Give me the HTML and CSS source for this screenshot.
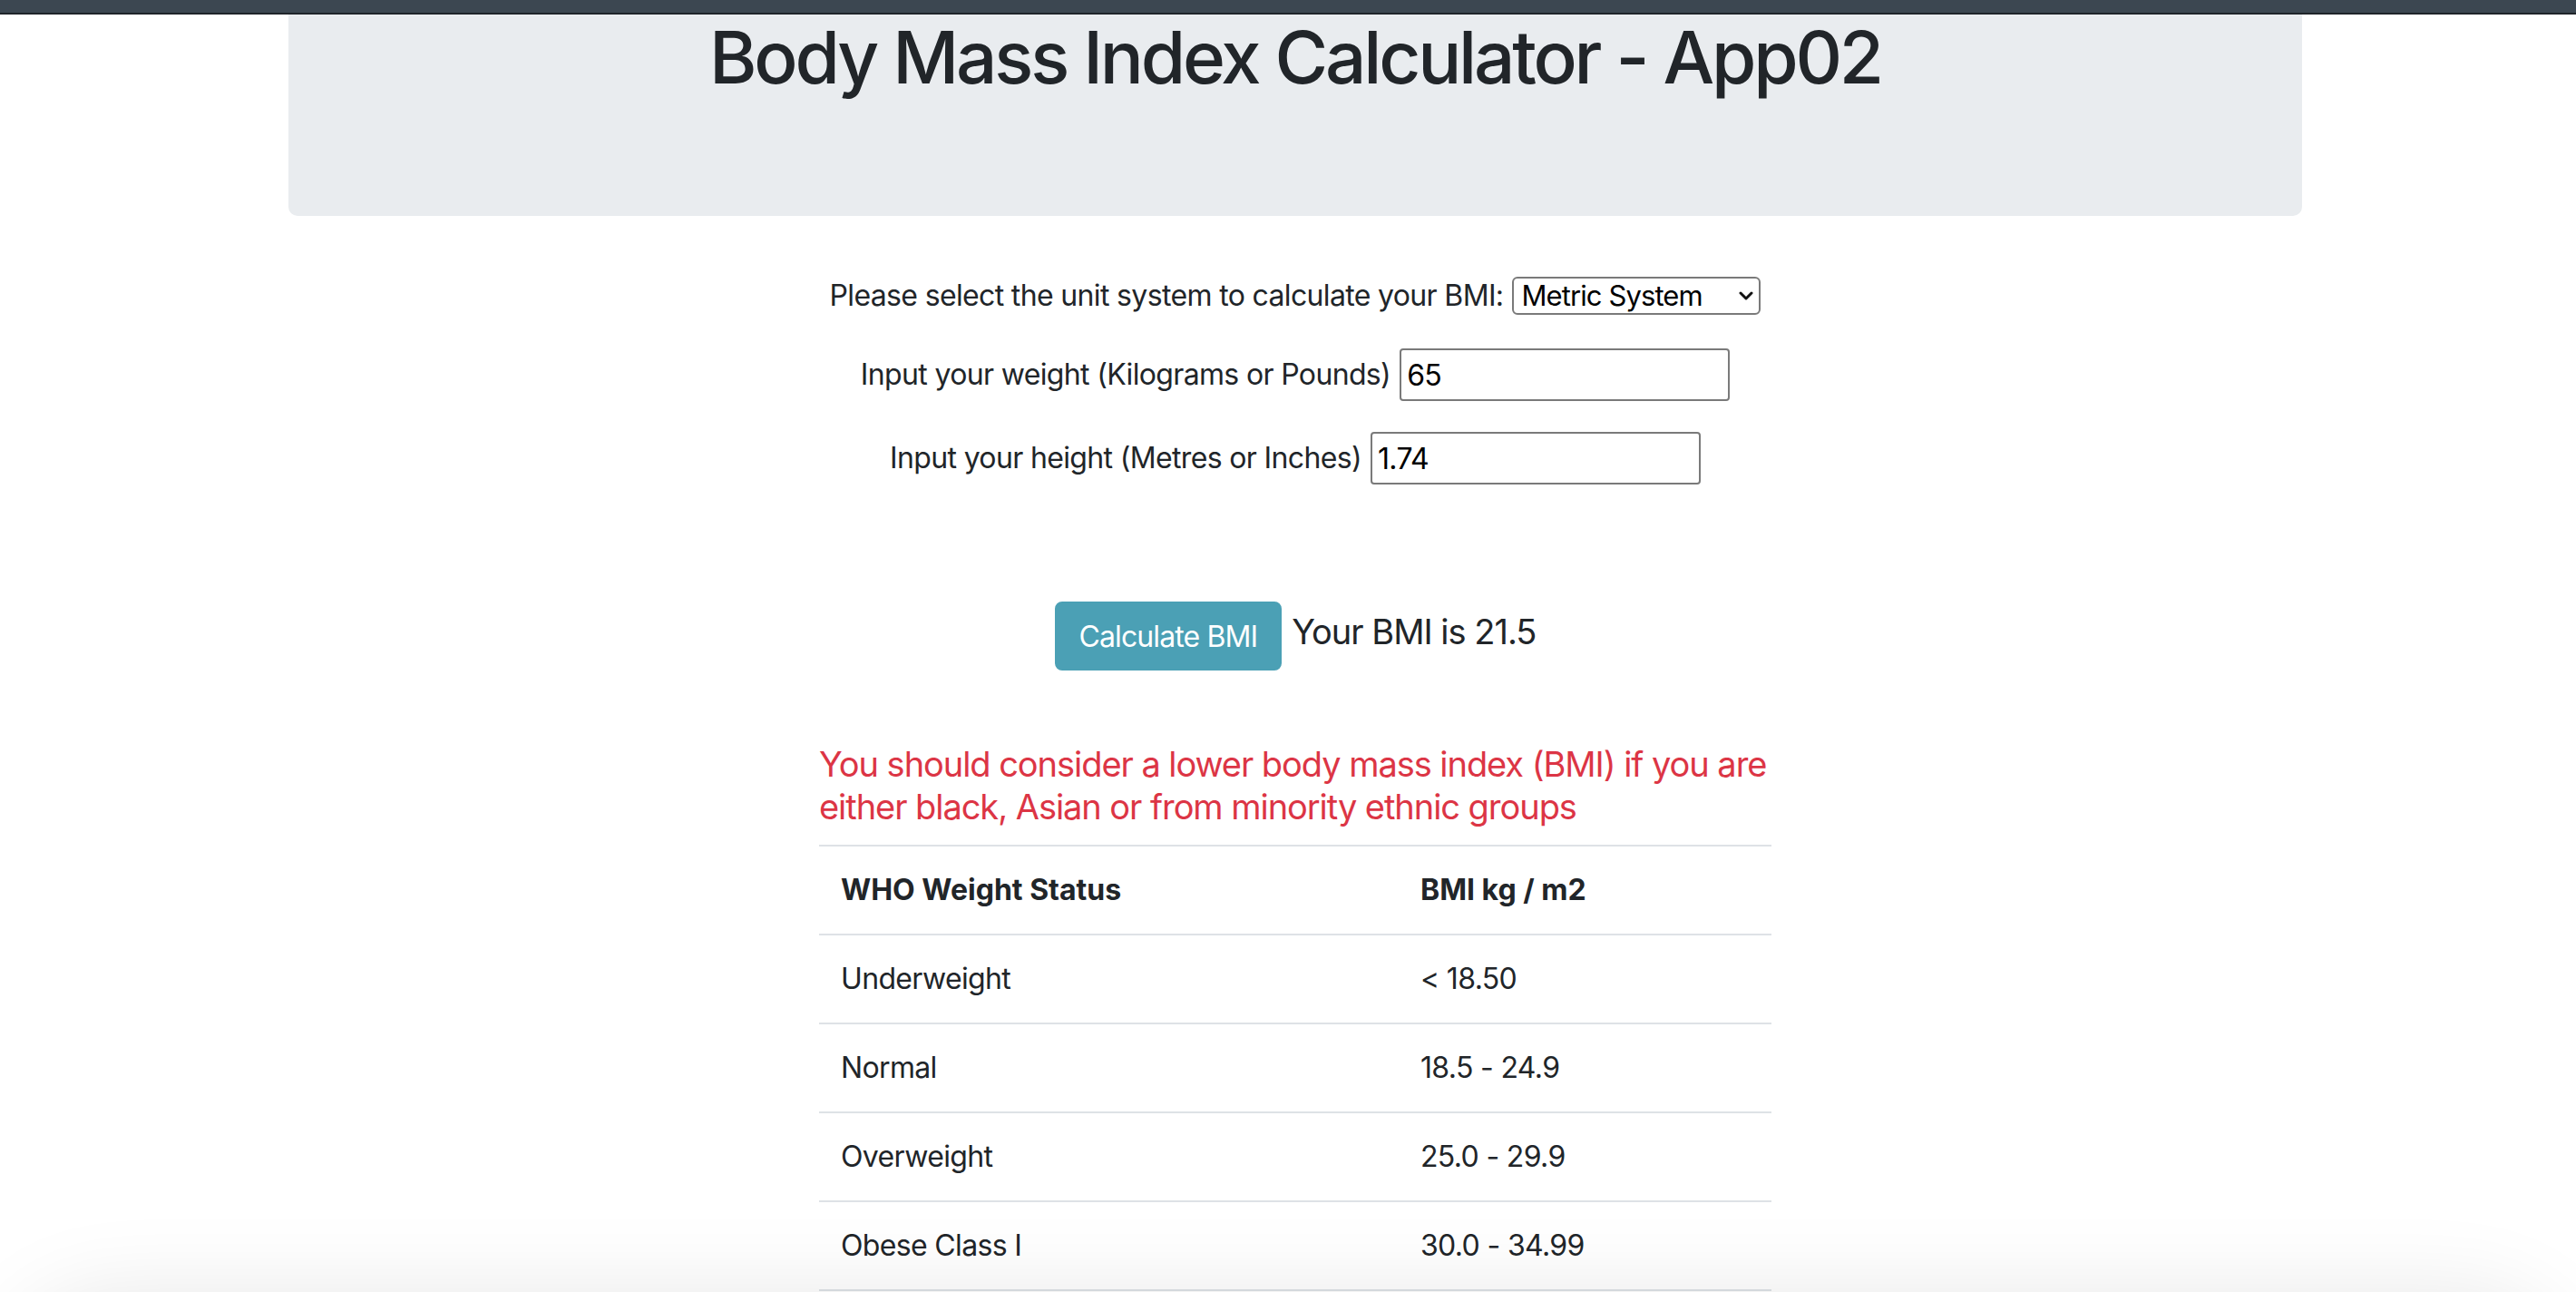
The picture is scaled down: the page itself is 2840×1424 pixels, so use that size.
FILE: index.html
```html
<!DOCTYPE html>
<html lang="en">
<head>
<meta charset="utf-8">
<title>Body Mass Index Calculator - App02</title>
<link rel="stylesheet" href="styles.css">
</head>
<body>
<div class="topbar"></div>
<div class="page">
  <div class="container">
    <header class="jumbotron">
      <h1 class="title">Body Mass Index Calculator - App02</h1>
    </header>

    <form class="calc">
      <div class="field">
        <label for="unit">Please select the unit system to calculate your BMI:</label>
        <span class="select-wrap">
          <select id="unit" class="select">
            <option>Metric System</option>
            <option>Imperial System</option>
          </select>
          <svg class="chevron" viewBox="0 0 16 10" aria-hidden="true"><path d="M2 2l6 6 6-6" fill="none" stroke="#111" stroke-width="3" stroke-linecap="round" stroke-linejoin="round"/></svg>
        </span>
      </div>
      <div class="field">
        <label for="weight">Input your weight (Kilograms or Pounds)</label>
        <input id="weight" class="input" type="text" value="65">
      </div>
      <div class="field">
        <label for="height">Input your height (Metres or Inches)</label>
        <input id="height" class="input" type="text" value="1.74">
      </div>
      <div class="actions">
        <button type="button" class="btn">Calculate BMI</button>
        <span class="result">Your BMI is 21.5</span>
      </div>
    </form>

    <section class="info">
      <p class="warning">You should consider a lower body mass index (BMI) if you are either black, Asian or from minority ethnic groups</p>
      <table class="bmi-table">
        <colgroup><col class="col-status"><col></colgroup>
        <thead>
          <tr><th>WHO Weight Status</th><th>BMI kg / m2</th></tr>
        </thead>
        <tbody>
          <tr><td>Underweight</td><td>&lt; 18.50</td></tr>
          <tr><td>Normal</td><td>18.5 - 24.9</td></tr>
          <tr><td>Overweight</td><td>25.0 - 29.9</td></tr>
          <tr><td>Obese Class I</td><td>30.0 - 34.99</td></tr>
        </tbody>
      </table>
    </section>
  </div>
</div>
<div class="window-shadow"></div>
</body>
</html>
```

FILE: styles.css
```css
html, body {
  margin: 0;
  height: 1424px;
  overflow: hidden;
}

body {
  font-family: Inter, "Noto Sans", "Liberation Sans", sans-serif;
  color: #212529;
  background: #fff;
  letter-spacing: -0.65px;
}

.topbar {
  height: 14px;
  background: #3c4751;
  border-bottom: 2px solid #1f2429;
}

.page {
  padding-left: 16px;
}

.container {
  width: 2220px;
  margin: 0 auto;
}

.jumbotron {
  height: 222px;
  background: #e9ecef;
  border-radius: 0 0 10px 10px;
  margin-bottom: 64px;
}

.title {
  margin: 0;
  text-align: center;
  font-size: 80px;
  font-weight: 500;
  line-height: 94px;
  letter-spacing: -3.2px;
}

.calc {
  display: flex;
  flex-direction: column;
  align-items: center;
}

.field {
  display: flex;
  align-items: center;
  gap: 10px;
  font-size: 32px;
  line-height: 48px;
  margin-bottom: 34px;
}

.select-wrap {
  position: relative;
  display: inline-flex;
}

.select {
  -webkit-appearance: none;
  appearance: none;
  width: 274px;
  height: 42px;
  padding: 0 0 0 8px;
  border: 2px solid #7a7a7a;
  border-radius: 6px;
  background: #fff;
  color: #000;
  font-family: Inter, "Noto Sans", sans-serif;
  font-size: 31px;
  letter-spacing: -0.9px;
  line-height: 38px;
}

.chevron {
  position: absolute;
  right: 8px;
  top: 16px;
  width: 16px;
  height: 10px;
  pointer-events: none;
}

.input {
  box-sizing: border-box;
  width: 364px;
  height: 58px;
  padding: 0 6px;
  border: 2px solid #7a7a7a;
  border-radius: 4px;
  color: #000;
  font-family: Inter, "Noto Sans", sans-serif;
  font-size: 32px;
  letter-spacing: -0.65px;
}

.actions {
  display: flex;
  align-items: center;
  gap: 11px;
  margin-top: 95px;
}

.btn {
  height: 76px;
  padding: 0 25px;
  border: 2px solid #4ba0b5;
  border-radius: 8px;
  background: #4ba0b5;
  color: #fff;
  font-family: Inter, "Noto Sans", sans-serif;
  font-size: 32px;
  letter-spacing: -0.9px;
}

.result {
  font-size: 38px;
  line-height: 48px;
  letter-spacing: -1px;
  margin-bottom: 10px;
}

.info {
  width: 1050px;
  margin: 80px auto 0;
}

.warning {
  margin: 0 -12px 18px 0;
  color: #dc3545;
  font-size: 38px;
  line-height: 47px;
  letter-spacing: -1.05px;
}

.bmi-table {
  width: 100%;
  table-layout: fixed;
  border-collapse: collapse;
  font-size: 32px;
  line-height: 48px;
}

.col-status {
  width: 639px;
}

.bmi-table th,
.bmi-table td {
  padding: 24px;
  border-top: 2px solid #dee2e6;
  text-align: left;
  vertical-align: top;
}

.bmi-table tbody tr:last-child td {
  border-bottom: 2px solid #dee2e6;
}

.bmi-table th {
  font-weight: 700;
  letter-spacing: 0;
}

.window-shadow {
  position: fixed;
  left: 40px;
  right: 40px;
  top: 1460px;
  height: 200px;
  border-radius: 80px;
  background: #fff;
  box-shadow: 0 0 100px 30px rgba(0, 0, 0, 0.1);
  pointer-events: none;
}
```
